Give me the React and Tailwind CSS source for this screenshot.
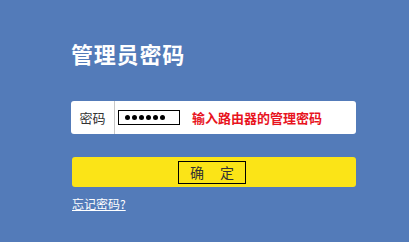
export default function App() {
  const font = { fontFamily: '"Noto Sans CJK SC", "Liberation Sans", sans-serif' };
  return (
    <div className="w-[409px] h-[242px] bg-[#537bb9] pl-[71px] pr-[53px] pt-[41px]" style={font}>
      <div className="text-[22px] leading-[24px] font-bold text-white tracking-[0.8px]">管理员密码</div>
      <div className="mt-[36px] h-[33px] bg-white rounded-[3px] flex items-center">
        <div className="w-[44px] h-full flex items-center justify-center text-[13px] text-[#333] border-r border-[#c8c8c8]">密码</div>
        <div className="ml-[3px] w-[62px] h-[15px] border border-black flex items-center pl-[6px] gap-[2px]">
          {[0, 1, 2, 3, 4, 5].map((i) => (
            <span key={i} className="w-[5px] h-[5px] rounded-full bg-black" />
          ))}
        </div>
        <div className="ml-[12px] text-[13px] font-bold text-[#e8141e]">输入路由器的管理密码</div>
      </div>
      <div className="mt-[23px] ml-px h-[30px] bg-[#fbe417] rounded-[3px] flex items-center justify-center">
        <div className="mr-[4px] w-[68px] h-[23px] border border-black flex items-center justify-center text-[14px] text-[#333] gap-[16px]">
          <span>确</span><span>定</span>
        </div>
      </div>
      <div className="mt-[3px] ml-px">
        <a className="text-[12px] text-white underline">忘记密码?</a>
      </div>
    </div>
  );
}
